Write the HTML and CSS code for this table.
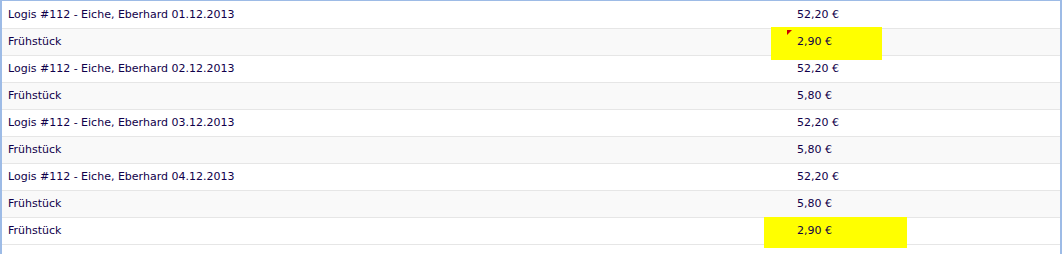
FILE: index.html
```html
<!DOCTYPE html>
<html lang="de">
<head>
<meta charset="utf-8">
<title>Rechnung</title>
<link rel="stylesheet" href="styles.css">
</head>
<body>
<div class="frame">
  <div class="table">
    <div class="row"><div class="cell">Logis #112 - Eiche, Eberhard 01.12.2013</div><div class="cell amount">52,20 €</div></div>
    <div class="row alt"><div class="cell">Frühstück</div><div class="cell amount"><span class="mark mark-a"></span><span class="flag"></span><span class="val">2,90 €</span></div></div>
    <div class="row"><div class="cell">Logis #112 - Eiche, Eberhard 02.12.2013</div><div class="cell amount">52,20 €</div></div>
    <div class="row alt"><div class="cell">Frühstück</div><div class="cell amount">5,80 €</div></div>
    <div class="row"><div class="cell">Logis #112 - Eiche, Eberhard 03.12.2013</div><div class="cell amount">52,20 €</div></div>
    <div class="row alt"><div class="cell">Frühstück</div><div class="cell amount">5,80 €</div></div>
    <div class="row"><div class="cell">Logis #112 - Eiche, Eberhard 04.12.2013</div><div class="cell amount">52,20 €</div></div>
    <div class="row alt"><div class="cell">Frühstück</div><div class="cell amount">5,80 €</div></div>
    <div class="row"><div class="cell">Frühstück</div><div class="cell amount"><span class="mark mark-b"></span><span class="val">2,90 €</span></div></div>
  </div>
</div>
</body>
</html>
```
FILE: styles.css
```css
html, body {
  margin: 0;
  padding: 0;
  background: #ffffff;
}
body {
  font-family: "DejaVu Sans", Tahoma, sans-serif;
  font-size: 11px;
  color: #10004a;
}
.frame {
  width: 1058px;
  height: 252px;
  padding-top: 1px;
  border-left: 2px solid #9dbbe6;
  border-right: 2px solid #9dbbe6;
  border-top: 1px solid #9dbbe6;
  background: #ffffff;
}
.table {
  display: flex;
  flex-direction: column;
}
.row {
  display: grid;
  grid-template-columns: 789px 1fr;
  height: 26px;
  border-bottom: 1px solid #e6e6e6;
  background: #ffffff;
}
.row.alt {
  background: #f9f9f9;
}
.cell {
  padding: 0 6px 2px;
  display: flex;
  align-items: center;
  white-space: nowrap;
}
.amount {
  position: relative;
}
.mark {
  position: absolute;
  background: #ffff00;
}
.mark-a {
  left: -20px;
  top: -2px;
  width: 111px;
  height: 33px;
}
.mark-b {
  left: -27px;
  top: -1px;
  width: 143px;
  height: 31px;
}
.flag {
  position: absolute;
  left: -4px;
  top: 1px;
  width: 0;
  height: 0;
  border-top: 5px solid #cc0000;
  border-right: 5px solid transparent;
}
.val {
  position: relative;
}
```
